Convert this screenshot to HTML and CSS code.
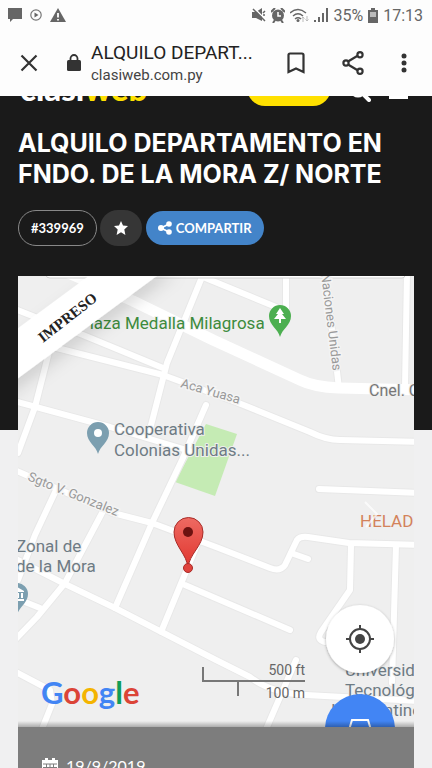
FILE: index.html
```html
<!DOCTYPE html>
<html lang="es">
<head>
<meta charset="utf-8">
<meta name="viewport" content="width=device-width, initial-scale=1">
<title>ALQUILO DEPARTAMENTO EN FNDO. DE LA MORA Z/ NORTE</title>
<link rel="stylesheet" href="styles.css">
</head>
<body>
<div class="screen">
  <div class="status">
    <div class="status-left">
      <svg width="14" height="16" viewBox="0 0 14 16"><path d="M0 1h14v11H5l-3 3v-3H0z"/></svg>
      <svg width="12" height="12" viewBox="0 0 12 12"><circle cx="6" cy="6" r="5.2" fill="none" stroke="#777" stroke-width="1.2"/><path d="M4.500 3.500l4 2.500-4 2.500z"/></svg>
      <svg width="16" height="14" viewBox="0 0 16 14"><path d="M8 0l8 14H0z"/><path d="M8 5v4.500M8 11v1.600" stroke="#fff" stroke-width="1.800"/></svg>
    </div>
    <div class="status-right">
      <svg width="14" height="14" viewBox="0 0 14 14"><path d="M0 4h4l6-4v13L4 10H0z"/><path d="M2 0l12 12" stroke="#fff" stroke-width="1.500"/><path d="M1 1l12 12M11 5l2-2M11 7h2" stroke="#666" stroke-width="1.500"/></svg>
      <svg width="14" height="15" viewBox="0 0 14 15"><circle cx="7" cy="7.500" r="6"/><path d="M0 4l4-4M14 4l-4-4M2 15l2-3M12 15l-2-3" stroke="#666" stroke-width="2"/><path d="M7 4v4h3" fill="none" stroke="#fff" stroke-width="1.500"/></svg>
      <svg width="19" height="15" viewBox="0 0 19 15"><g fill="none" stroke="#666" stroke-width="1.400"><path d="M0 5q8-7 16 0M3 8q5-4.500 10 0M5 11q3-2.500 6 0"/></g><circle cx="8" cy="12.500" r="1.500"/><path d="M13 9v5M11.500 10.500L13 9l1.500 1.500M17 8v5M15.500 11.500L17 13l1.500-1.500" fill="none" stroke="#bbb"/></svg>
      <svg width="14" height="14" viewBox="0 0 14 14"><path d="M0 12h2v2H0zM4 9h2v5H4zM8 5h2v9H8zM12 0h2v14h-2z"/></svg>
      <span class="battery-text">35%</span>
      <svg width="10" height="15" viewBox="0 0 10 15"><path d="M3 0h4v2h3v13H0V2h3z"/><path d="M2 4h6v5H2z" fill="#bbb"/></svg>
      <span class="clock">17:13</span>
    </div>
  </div>

  <div class="toolbar">
    <button class="tool close" aria-label="Cerrar"><svg width="18" height="18" viewBox="0 0 18 18"><path d="M1.500 1.500l15 15M16.500 1.500l-15 15" fill="none" stroke="#333" stroke-width="2.200"/></svg></button>
    <svg class="lock" width="14" height="18" viewBox="0 0 14 18"><path d="M1.500 6h11q1.500 0 1.500 1.500v8q0 1.500-1.500 1.500h-11Q0 17 0 15.500v-8Q0 6 1.500 6z" fill="#333"/><path d="M3.500 7V4.500a3.500 3.500 0 0 1 7 0V7" fill="none" stroke="#333" stroke-width="1.800"/></svg>
    <div class="page-id">
      <div class="page-name">ALQUILO DEPART...</div>
      <div class="page-url">clasiweb.com.py</div>
    </div>
    <div class="tools">
      <button class="tool" aria-label="Guardar"><svg width="18" height="22" viewBox="0 0 18 22"><path d="M1.500 3q0-1.500 1.500-1.500h12q1.500 0 1.500 1.500v17L9 16.500 1.500 20z" fill="none" stroke="#333" stroke-width="2.200"/></svg></button>
      <button class="tool" aria-label="Compartir"><svg width="22" height="24" viewBox="0 0 22 24"><g fill="none" stroke="#333" stroke-width="2.200"><path d="M6 10.500l10-6M6 13.500l10 6"/><circle cx="4" cy="12" r="2.600"/><circle cx="18" cy="3.700" r="2.600"/><circle cx="18" cy="20.300" r="2.600"/></g></svg></button>
      <button class="tool" aria-label="Más"><svg width="6" height="20" viewBox="0 0 6 20"><g fill="#333"><circle cx="3" cy="3" r="2.500"/><circle cx="3" cy="10" r="2.500"/><circle cx="3" cy="17" r="2.500"/></g></svg></button>
    </div>
  </div>

  <header class="hero">
    <div class="site-bar">
      <a class="logo" href="#">clasi<span>web</span></a>
      <div class="site-actions">
        <a class="publish" href="#" aria-label="Publicar"></a>
        <svg width="22" height="22" viewBox="0 0 22 22"><circle cx="9" cy="9" r="7" fill="none" stroke="#fff" stroke-width="3"/><path d="M14 14l6 6" stroke="#fff" stroke-width="4" stroke-linecap="round"/></svg>
        <svg width="19" height="22" viewBox="0 0 19 22"><path d="M0 3h19M0 10h19M0 17h19" stroke="#fff" stroke-width="4"/></svg>
      </div>
    </div>
    <h1>ALQUILO DEPARTAMENTO EN FNDO. DE LA MORA Z/ NORTE</h1>
    <div class="chips">
      <span class="chip code">#339969</span>
      <button class="chip fav" aria-label="Favorito"><svg width="14" height="14" viewBox="0 0 14 14"><path d="M7 0l2 4.600 5 .5-3.700 3.300L11.400 14 7 11.200 2.600 14l1.100-5.600L0 5.100l5-.5z" fill="#fff"/></svg></button>
      <button class="chip share"><svg width="14" height="14" viewBox="0 0 14 14"><path d="M3 7l8-4M3 7l8 4" stroke="#fff" stroke-width="1.800"/><g fill="#fff"><circle cx="3" cy="7" r="3"/><circle cx="11" cy="3" r="2.800"/><circle cx="11" cy="11" r="2.800"/></g></svg>COMPARTIR</button>
    </div>
  </header>

  <main class="listing">
    <svg class="map" viewBox="18 276 396 451" role="img" aria-label="Mapa">
      <defs>
        <linearGradient id="pin" x1="0" y1="0" x2="0" y2="1"><stop offset="0" stop-color="#ee6a62"/><stop offset="1" stop-color="#e0352e"/></linearGradient>
        <filter id="soft" x="-20%" y="-20%" width="140%" height="150%"><feDropShadow dx="0" dy="1" stdDeviation="1.500" flood-opacity=".35"/></filter>
        <filter id="ribbon" x="-20%" y="-20%" width="150%" height="160%"><feDropShadow dx="4" dy="8" stdDeviation="8" flood-opacity=".13"/></filter>
        <linearGradient id="fade" x1="0" y1="0" x2="0" y2="1"><stop offset="0" stop-opacity="0"/><stop offset="1" stop-opacity=".28"/></linearGradient>
        <g id="streets">
          <path id="avenue" d="M66 272L133 301L213 340L300 380Q314 387 339 388L420 390"/>
          <path d="M204 272L167 363L148 437M10 400L110 427L190 451M10 307L40 319L83 335L163 368M45 345L163 375L236 402L310 432Q326 440 340 440L420 442"/>
          <path d="M50 348L35 407L18 453M203 277L276 307M286 272V310M325 272L339 388M407 272L405 388"/>
          <path d="M10 468L113 513L152 523L216 547L270 568Q280 572 285 565L297 540Q300 536 308 537L349 543L420 545"/>
          <path d="M291 553L308 559M319 489L420 493M351 545L350 590L321 632Q316 640 325 642M396 545L392 683"/>
          <path d="M206 405L182 460L152 523L115 608M57 488L35 535L18 580M102 513L65 583L37 617L12 643"/>
          <path d="M10 556L65 584L115 608L216 660L250 677Q270 693 306 695L420 701M199 540L161 632M185 585L290 630M296 660L264 734M10 669L50 690L52 704L40 734M20 600L40 608"/>
        </g>
        <path id="drop" d="M0 20C-2 12-11 8-11-1A11 11 0 1 1 11-1C11 8 2 12 0 20z"/>
      </defs>
      <path d="M0 270h430v470H0z" fill="#efefef"/>
      <path d="M206 424L237 434L215 496L175 482z" fill="#c5ebb4"/>
      <use href="#streets" class="street-edge"/>
      <use href="#streets" class="street"/>
      <use href="#avenue" class="avenue"/>
      <path d="M46 270H405v5q0 3-3 3H50q-4 0-4-3z" fill="#fff" stroke="#d2d2d2"/>

      <g class="place">
        <text x="79" y="329" class="green">Plaza Medalla Milagrosa</text>
        <text x="114" y="435">Cooperativa</text>
        <text x="114" y="456">Colonias Unidas...</text>
        <text x="16" y="552">Zonal de</text>
        <text x="16" y="572">de la Mora</text>
        <text x="345" y="676">Universidad</text>
        <text x="345" y="696">Tecnológica</text>
        <text x="331" y="716">Intercontinental</text>
        <text x="369" y="396" class="road-big">Cnel. Cabrera</text>
        <text x="360" y="527" class="orange">HELADERIA</text>
      </g>
      <g class="road-name">
        <text transform="translate(180 387) rotate(16)">Aca Yuasa</text>
        <text transform="translate(27 480) rotate(22)">Sgto V. Gonzalez</text>
        <text transform="translate(321 274) rotate(83)">Naciones Unidas</text>
      </g>
      <path d="M365 502l12 12-11 13" class="next"/>

      <g transform="translate(280 317)"><use href="#drop" fill="#4caf50"/><path d="M0-9l4 6H2l4 5H1v4h-2V2h-5l4-5h-2z" fill="#fff"/></g>
      <g transform="translate(98 434)"><use href="#drop" fill="#7c9fb0"/><circle cy="-1" r="4" fill="#fff"/></g>
      <g transform="translate(17 595)"><use href="#drop" fill="#7c9fb0"/><path d="M-6-4L0-8L7-4v1H-6zM-5 4H7v2H-5zM0-2h2v5H0zM4-2h2v5H4z" fill="#fff"/></g>
      <path d="M188 568C187 554 174 546 174 532A14.500 14.500 0 0 1 203 532C203 546 189 554 188 568z" fill="url(#pin)" stroke="#a92c28"/>
      <circle cx="188" cy="532" r="5" fill="#6d1210"/>
      <circle cx="188" cy="568" r="4.500" fill="#e0443e" stroke="#a92c28"/>

      <path d="M203 667v14h102M238 681v15" class="scale"/>
      <g class="scale-text"><text x="305" y="675">500 ft</text><text x="305" y="698">100 m</text></g>
      <text x="41" y="704" class="google"><tspan fill="#4285f4">G</tspan><tspan fill="#db4437">o</tspan><tspan fill="#f4b400">o</tspan><tspan fill="#4285f4">g</tspan><tspan fill="#0f9d58">l</tspan><tspan fill="#db4437">e</tspan></text>

      <circle cx="360" cy="639" r="34" fill="#fff" filter="url(#soft)"/>
      <g fill="none" stroke="#444" stroke-width="2"><circle cx="360" cy="639" r="10"/><path d="M360 625v5M360 648v5M346 639h5M369 639h5"/></g>
      <circle cx="360" cy="639" r="5" fill="#444"/>
      <circle cx="360" cy="729" r="35" fill="#4285f4"/>
      <path d="M349 730l3-10h16l3 10" fill="none" stroke="#fff" stroke-width="2"/>
      <path d="M0 721h430v6H0z" fill="url(#fade)"/>

      <path d="M0 341.500L105 264H173L0 391.500z" fill="#fff" filter="url(#ribbon)"/>
      <text transform="translate(43 343) rotate(-38)" class="ribbon-text">IMPRESO</text>
    </svg>
    <div class="meta">
      <svg width="16" height="16" viewBox="0 0 16 16"><path d="M0 2h16v14H0zM3 0h3v3H3zM10 0h3v3h-3z" fill="#fff"/><path d="M1 6h14M1 9.500h14M1 13h14M4.500 6v9M8 6v9M11.500 6v9" stroke="#7d7d7d"/></svg>
      <time datetime="2019-09-19">19/9/2019</time>
    </div>
  </main>
</div>
</body>
</html>
```
FILE: styles.css
```css
* { box-sizing: border-box; }

body {
  margin: 0;
  background: #f0f0f1;
  font-family: Roboto, "Liberation Sans", sans-serif;
}

button {
  border: 0;
  padding: 0;
  background: none;
  font: inherit;
  color: inherit;
}

svg { display: block; flex: none; }

.screen {
  height: 100vh;
  overflow: hidden;
}

.status {
  display: flex;
  justify-content: space-between;
  align-items: center;
  height: 30px;
  padding: 0 9px 0 8px;
  background: #fdfdfd;
  color: #666;
  fill: #666;
  font-size: 16px;
}

.status-left { display: flex; align-items: center; gap: 8px; }
.status-right { display: flex; align-items: center; gap: 5px; }

.toolbar {
  display: flex;
  align-items: center;
  height: 66px;
  padding: 0 25px 0 20px;
  background: #fdfdfd;
  color: #222;
}

.lock { margin: 0 10px 0 29px; }

.page-id { flex: 1; min-width: 0; white-space: nowrap; }
.page-name { font-size: 19px; line-height: 24px; }
.page-url { font-size: 15px; line-height: 20px; color: #444; }

.tools { display: flex; align-items: center; gap: 37px; }

.hero {
  padding: 0 18px 184px;
  background: #1a1a1a;
  color: #fff;
}

.site-bar {
  display: flex;
  justify-content: space-between;
  align-items: flex-end;
  height: 10px;
  padding-left: 2px;
  overflow: hidden;
}

.logo {
  color: #fff;
  font: 900 33px/36px Lato, sans-serif;
  text-decoration: none;
}

.logo span { color: #ffe000; }

.site-actions { display: flex; align-items: flex-end; gap: 18px; padding-right: 6px; }

.site-actions svg { margin-bottom: 4px; }

.publish {
  width: 84px;
  height: 36px;
  border-radius: 18px;
  background: #ffe000;
}

h1 {
  margin: 22px 0 20px;
  font: 700 25px/31px Inter, sans-serif;
}

.chips {
  display: flex;
  align-items: center;
  gap: 3px;
  font: 700 13px/20px Lato, sans-serif;
}

.chip {
  display: flex;
  align-items: center;
  justify-content: center;
  height: 36px;
  border-radius: 18px;
}

.code { padding: 0 12px; border: 1px solid #888; }
.fav { width: 42px; background: #363636; }
.share { gap: 4px; height: 34px; margin-left: 1px; padding: 0 12px; background: #4384c9; }

.listing { margin: -154px 18px 0; }

.map {
  width: 100%;
  height: auto;
  overflow: hidden;
}

.street, .street-edge, .avenue {
  fill: none;
  stroke: #fff;
  stroke-width: 6px;
  stroke-linecap: round;
  stroke-linejoin: round;
}

.street-edge { stroke: #e8e8e8; stroke-width: 8px; }
.avenue { stroke-width: 11px; }

.place { font-size: 17px; fill: #6e7b84; paint-order: stroke; stroke: #efefef; stroke-width: 2px; }
.place .green { fill: #3d8b3d; }
.place .orange { fill: #d3825b; }
.place .road-big { fill: #777; font-size: 16px; }

.road-name { font-size: 13px; fill: #999; paint-order: stroke; stroke: #f4f4f4; stroke-width: 3px; }

.next { fill: none; stroke: #fff; stroke-width: 2px; opacity: .7; }

.scale { fill: none; stroke: #777; stroke-width: 2px; }
.scale-text { font-size: 14px; fill: #666; text-anchor: end; }

.google { font: 700 31px Lato, sans-serif; }

.ribbon-text { font: 700 15px "Liberation Serif", serif; fill: #222; }

.meta {
  display: flex;
  align-items: center;
  gap: 8px;
  padding: 29px 24px;
  background: #7d7d7d;
  color: #fff;
  font: 400 16px/20px Lato, sans-serif;
}
```
